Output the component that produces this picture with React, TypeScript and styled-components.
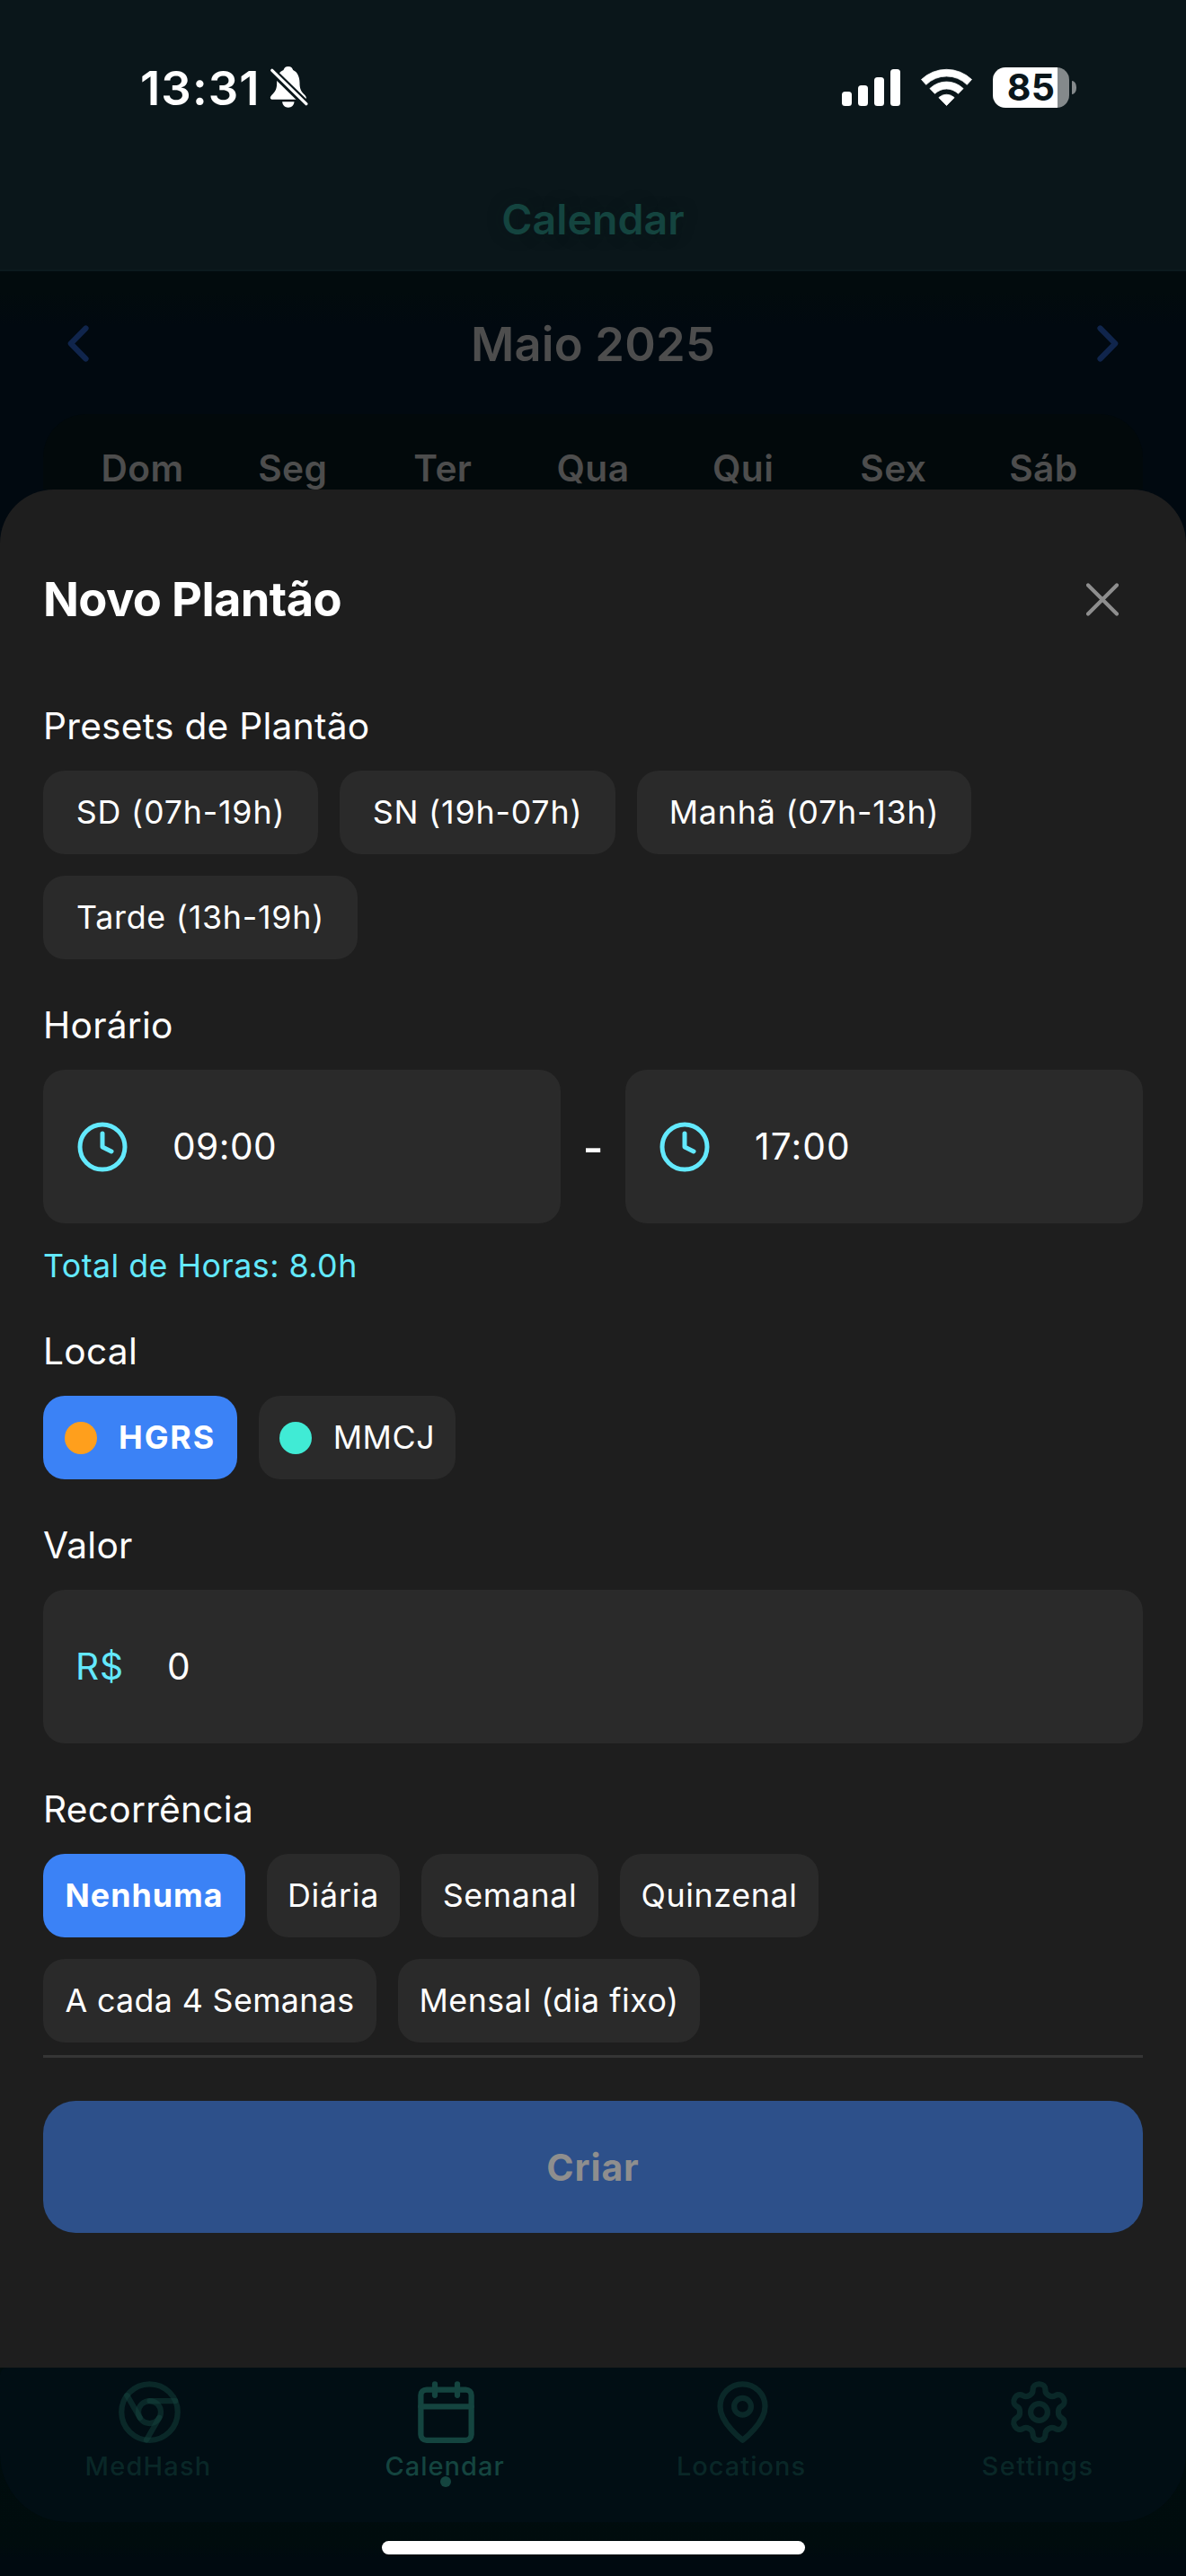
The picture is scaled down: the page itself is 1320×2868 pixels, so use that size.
import React from 'react';
import styled, { createGlobalStyle } from 'styled-components';

const GlobalStyle = createGlobalStyle`
  *, *::before, *::after { box-sizing: border-box; }
  html, body { margin: 0; padding: 0; background: #010910; }
  button { border: 0; padding: 0; margin: 0; background: none; font: inherit; color: inherit; }
`;

const colors = {
  sheet: '#1e1e1e',
  field: '#2a2a2a',
  primary: '#3b82f6',
  accent: '#63e9fd',
  text: '#ffffff',
  dimText: '#4d4d4d',
  teal: '#14443f',
  tealFaint: 'rgba(20, 68, 62, 0.48)',
};

const Screen = styled.div`
  width: 1320px;
  height: 2868px;
  overflow: hidden;
  display: flex;
  flex-direction: column;
  background: #010910;
  color: ${colors.text};
  font-family: Inter, 'Liberation Sans', sans-serif;
  font-size: 40.7px;
`;

/* ---------- Status bar and app header ---------- */

const Header = styled.header`
  height: 302px;
  flex: none;
  background: #0a161a;
  border-bottom: 2px solid #0b1a1e;
`;

const StatusBar = styled.div`
  height: 194px;
  display: flex;
  align-items: center;
  justify-content: space-between;
  padding: 0 122px 0 156px;
`;

const StatusGroup = styled.div<{ $gap: number }>`
  display: flex;
  align-items: center;
  gap: ${(p) => p.$gap}px;
`;

const Clock = styled.span`
  font-size: 52.6px;
  font-weight: 600;
  line-height: 64px;
  letter-spacing: 1.1px;
  padding-top: 2px;
`;

const SignalBars = styled.div`
  display: flex;
  align-items: flex-end;
  gap: 7px;
  height: 41px;
`;

const SignalBar = styled.span<{ $height: number }>`
  width: 11px;
  height: ${(p) => p.$height}px;
  border-radius: 3.5px;
  background: #fff;
`;

const Battery = styled.div`
  display: flex;
  align-items: center;
  gap: 3px;
`;

const BatteryBody = styled.div`
  width: 85px;
  height: 45px;
  border-radius: 14px;
  display: flex;
  align-items: center;
  justify-content: center;
  background: linear-gradient(to right, #fff 72px, #84898b 72px);
  color: #0a161a;
  font-size: 41px;
  font-weight: 700;
  line-height: 45px;
  letter-spacing: 0.4px;
`;

const BatteryNub = styled.span`
  width: 5px;
  height: 15px;
  border-radius: 0 5px 5px 0 / 0 7px 7px 0;
  background: #84898b;
`;

const AppTitle = styled.h1`
  margin: 0;
  height: 100px;
  line-height: 100px;
  text-align: center;
  font-size: 46.5px;
  font-weight: 600;
  color: ${colors.teal};
  text-shadow: 0 0 18px rgba(8, 30, 26, 0.35);
`;

/* ---------- Dimmed month view ---------- */

const Month = styled.section`
  height: 243px;
  flex: none;
  padding: 2px 48px 0;
  background: linear-gradient(to bottom, #020b0d 0, #020b0d 24px, #010910 60px);
`;

const MonthNav = styled.div`
  height: 157px;
  display: flex;
  align-items: center;
  justify-content: space-between;
  padding: 0 27px;
`;

const MonthTitle = styled.h2`
  margin: 0;
  font-size: 52.4px;
  font-weight: 600;
  line-height: 64px;
  letter-spacing: 0.24px;
  color: ${colors.dimText};
`;

const MonthCard = styled.div`
  height: 84px;
  border-radius: 48px 48px 0 0;
  background: #02090b;
  padding: 36px 27px 0;
`;

const Weekdays = styled.div`
  display: grid;
  grid-template-columns: repeat(7, 1fr);
  text-align: center;
  line-height: 49px;
  font-weight: 600;
  letter-spacing: 0.4px;
  color: ${colors.dimText};
`;

/* ---------- Sheet ---------- */

const SheetBackdrop = styled.div`
  flex: none;
  background: #010910;
`;

const Sheet = styled.main`
  height: 2091px;
  border-radius: 60px 60px 0 0;
  background: ${colors.sheet};
  padding: 92px 48px 150px;
  display: flex;
  flex-direction: column;
`;

const SheetHeader = styled.div`
  height: 60px;
  margin-bottom: 87px;
  display: flex;
  align-items: center;
  justify-content: space-between;
  padding-right: 27px;
`;

const SheetTitle = styled.h2`
  margin: 0;
  font-size: 52.4px;
  font-weight: 700;
  line-height: 62px;
  letter-spacing: -0.61px;
`;

const CloseButton = styled.button`
  width: 36px;
  height: 37px;
  display: flex;
`;

const Field = styled.section<{ $after: number }>`
  display: flex;
  flex-direction: column;
  gap: 24px;
  margin-bottom: ${(p) => p.$after}px;
`;

const Label = styled.h3`
  margin: 0;
  font-size: 40.7px;
  font-weight: 400;
  line-height: 50px;
  letter-spacing: 0.25px;
`;

const ChipRow = styled.div`
  display: flex;
  flex-wrap: wrap;
  gap: 24px;
`;

const Chip = styled.button<{ $width: number; $active?: boolean; $spacing: number }>`
  width: ${(p) => p.$width}px;
  height: 93px;
  border-radius: 24px;
  display: flex;
  align-items: center;
  justify-content: center;
  gap: 24px;
  white-space: nowrap;
  font-size: 35.8px;
  line-height: 47px;
  letter-spacing: ${(p) => p.$spacing}px;
  font-weight: ${(p) => (p.$active ? 700 : 400)};
  background: ${(p) => (p.$active ? colors.primary : colors.field)};
`;

const LocationDot = styled.span<{ $color: string }>`
  width: 36px;
  height: 36px;
  flex: none;
  border-radius: 50%;
  background: ${(p) => p.$color};
`;

const TimeRow = styled.div`
  display: grid;
  grid-template-columns: 1fr 72px 1fr;
  align-items: center;
`;

const InputBox = styled.div`
  height: 171px;
  border-radius: 24px;
  background: ${colors.field};
  display: flex;
  align-items: center;
  gap: 48px;
  padding: 0 36px;
`;

const InputValue = styled.span<{ $spacing?: number }>`
  line-height: 50px;
  letter-spacing: ${(p) => p.$spacing ?? 0}px;
`;

const Currency = styled.span`
  line-height: 50px;
  letter-spacing: 0.8px;
  color: ${colors.accent};
`;

const Dash = styled.span`
  text-align: center;
  font-size: 50px;
  line-height: 62px;
  font-weight: 500;
  padding-top: 2px;
`;

const TotalHours = styled.p`
  margin: 0;
  font-size: 35.8px;
  line-height: 46px;
  letter-spacing: 0.45px;
  color: ${colors.accent};
`;

const Footer = styled.div`
  border-top: 3px solid #353535;
  padding-top: 48px;
`;

const CreateButton = styled.button`
  display: block;
  width: 100%;
  height: 147px;
  border-radius: 36px;
  background: #2d508a;
  color: #8e8e8e;
  font-size: 41px;
  font-weight: 700;
  letter-spacing: 0.9px;
`;

/* ---------- Tab bar ---------- */

const TabArea = styled.footer`
  height: 232px;
  flex: none;
  display: flex;
  flex-direction: column;
  align-items: center;
  background: linear-gradient(to bottom, #000d0e 0, #000c0d 196px, #000a10 212px);
`;

const TabBar = styled.nav`
  width: 1320px;
  height: 172px;
  border-radius: 8px 8px 76px 76px;
  background: #010e14;
  display: grid;
  grid-template-columns: repeat(4, 1fr);
  padding-top: 12px;
`;

const Tab = styled.div<{ $active?: boolean }>`
  position: relative;
  display: flex;
  flex-direction: column;
  align-items: center;
  gap: 4px;
  color: ${(p) => (p.$active ? colors.teal : colors.tealFaint)};

  svg {
    display: block;
    margin-left: 3px;
  }
`;

const TabLabel = styled.span<{ $active?: boolean; $spacing: number }>`
  font-size: 29px;
  line-height: 37px;
  font-weight: 500;
  letter-spacing: ${(p) => p.$spacing}px;
`;

const TabDot = styled.span`
  position: absolute;
  left: 160px;
  top: 109px;
  width: 12px;
  height: 12px;
  border-radius: 50%;
  background: ${colors.teal};
`;

const HomeIndicator = styled.div`
  width: 471px;
  height: 15px;
  margin-top: 21px;
  border-radius: 8px;
  background: #fff;
`;

/* ---------- Icons ---------- */

const BellOffIcon = () => (
  <svg width="43" height="46" viewBox="0 0 128 138">
    <path
      fill="#fff"
      d="M62 0c-9 0-14 5-16 12C30 18 24 34 24 54c0 20-4 28-14 38-6 6-8 9-8 12 0 4 3 6 8 6h104c5 0 8-2 8-6 0-3-2-6-8-12-10-10-14-18-14-38 0-20-8-36-22-42C76 5 71 0 62 0z"
    />
    <path fill="#fff" d="M42 118h40c-1 12-9 19-20 19s-19-7-20-19z" />
    <path d="M4 11l120 117" stroke="#0a161a" strokeWidth="25" />
    <path d="M8 13l114 112" stroke="#fff" strokeWidth="10" strokeLinecap="round" />
  </svg>
);

const WifiIcon = () => (
  <svg width="57" height="42" viewBox="0 0 57 42">
    <g fill="#fff" transform="translate(28.5 41.5)" stroke="#fff" strokeWidth="0.8" strokeLinejoin="round">
      <path d="M-28-29A40.6 40.6 0 0 1 28-29L22.8-23.2A32.4 32.4 0 0 0-22.8-23.2Z" />
      <path d="M-18.6-18.9A26.6 26.6 0 0 1 18.6-18.9L13-13.2A18.6 18.6 0 0 0-13-13.2Z" />
      <path d="M-8.6-8.8A12.3 12.3 0 0 1 8.6-8.8L0 0Z" />
    </g>
  </svg>
);

const Chevron = ({ points }: { points: string }) => (
  <svg width="24" height="41" viewBox="0 0 24 41" fill="none">
    <polyline points={points} stroke="#10254c" strokeWidth="6.2" strokeLinecap="round" strokeLinejoin="round" />
  </svg>
);

const CloseIcon = () => (
  <svg width="36" height="37" viewBox="0 0 36 37" fill="none">
    <path d="M2 2.5l32 32M34 2.5l-32 32" stroke="#8e8e8e" strokeWidth="4.2" strokeLinecap="round" />
  </svg>
);

const LineIcon = ({ size, children }: { size: number; children: React.ReactNode }) => (
  <svg
    width={size}
    height={size}
    viewBox="0 0 24 24"
    fill="none"
    stroke="currentColor"
    strokeWidth="2"
    strokeLinecap="round"
    strokeLinejoin="round"
  >
    {children}
  </svg>
);

const ClockTint = styled.span`
  display: flex;
  color: ${colors.accent};
`;

const ClockIcon = () => (
  <ClockTint>
    <LineIcon size={60}>
      <circle cx="12" cy="12" r="10" />
      <polyline points="12 6 12 12 16 14" />
    </LineIcon>
  </ClockTint>
);

const tabs = [
  {
    label: 'MedHash',
    spacing: 1.2,
    icon: (
      <>
        <circle cx="12" cy="12" r="10" />
        <circle cx="12" cy="12" r="4" />
        <line x1="21.17" x2="12" y1="8" y2="8" />
        <line x1="3.95" x2="8.54" y1="6.06" y2="14" />
        <line x1="10.88" x2="15.46" y1="21.94" y2="14" />
      </>
    ),
  },
  {
    label: 'Calendar',
    spacing: 1.01,
    active: true,
    icon: (
      <>
        <rect width="18" height="18" x="3" y="4" rx="2" />
        <line x1="16" x2="16" y1="2" y2="6" />
        <line x1="8" x2="8" y1="2" y2="6" />
        <line x1="3" x2="21" y1="10" y2="10" />
      </>
    ),
  },
  {
    label: 'Locations',
    spacing: 1,
    icon: (
      <>
        <path d="M20 10c0 6-8 12-8 12s-8-6-8-12a8 8 0 0 1 16 0Z" />
        <circle cx="12" cy="10" r="3" />
      </>
    ),
  },
  {
    label: 'Settings',
    spacing: 1.5,
    icon: (
      <>
        <path d="M12.22 2h-.44a2 2 0 0 0-2 2v.18a2 2 0 0 1-1 1.73l-.43.25a2 2 0 0 1-2 0l-.15-.08a2 2 0 0 0-2.73.73l-.22.38a2 2 0 0 0 .73 2.73l.15.1a2 2 0 0 1 1 1.72v.51a2 2 0 0 1-1 1.74l-.15.09a2 2 0 0 0-.73 2.73l.22.38a2 2 0 0 0 2.73.73l.15-.08a2 2 0 0 1 2 0l.43.25a2 2 0 0 1 1 1.73V20a2 2 0 0 0 2 2h.44a2 2 0 0 0 2-2v-.18a2 2 0 0 1 1-1.73l.43-.25a2 2 0 0 1 2 0l.15.08a2 2 0 0 0 2.73-.73l.22-.39a2 2 0 0 0-.73-2.73l-.15-.08a2 2 0 0 1-1-1.74v-.5a2 2 0 0 1 1-1.74l.15-.09a2 2 0 0 0 .73-2.73l-.22-.38a2 2 0 0 0-2.73-.73l-.15.08a2 2 0 0 1-2 0l-.43-.25a2 2 0 0 1-1-1.73V4a2 2 0 0 0-2-2z" />
        <circle cx="12" cy="12" r="3" />
      </>
    ),
  },
];

const weekdays = ['Dom', 'Seg', 'Ter', 'Qua', 'Qui', 'Sex', 'Sáb'];

const presets = [
  { label: 'SD (07h-19h)', width: 306, spacing: 0.82 },
  { label: 'SN (19h-07h)', width: 307, spacing: 0.82 },
  { label: 'Manhã (07h-13h)', width: 372, spacing: 0.8 },
  { label: 'Tarde (13h-19h)', width: 350, spacing: 0.77 },
];

const locations = [
  { label: 'HGRS', color: '#ff9f1c', width: 216, spacing: 1.8, active: true },
  { label: 'MMCJ', color: '#40ebd5', width: 219, spacing: 0.6 },
];

const recurrences = [
  { label: 'Nenhuma', width: 225, spacing: 1, active: true },
  { label: 'Diária', width: 148, spacing: 0.8 },
  { label: 'Semanal', width: 197, spacing: 0.6 },
  { label: 'Quinzenal', width: 221, spacing: 0.65 },
  { label: 'A cada 4 Semanas', width: 371, spacing: 0.35 },
  { label: 'Mensal (dia fixo)', width: 336, spacing: 0.52 },
];

export default function App() {
  return (
    <>
      <GlobalStyle />
      <Screen>
        <Header>
          <StatusBar>
            <StatusGroup $gap={10}>
              <Clock>13:31</Clock>
              <BellOffIcon />
            </StatusGroup>
            <StatusGroup $gap={23}>
              <SignalBars>
                {[16, 23, 32, 41].map((h) => (
                  <SignalBar key={h} $height={h} />
                ))}
              </SignalBars>
              <WifiIcon />
              <Battery>
                <BatteryBody>85</BatteryBody>
                <BatteryNub />
              </Battery>
            </StatusGroup>
          </StatusBar>
          <AppTitle>Calendar</AppTitle>
        </Header>

        <Month>
          <MonthNav>
            <Chevron points="20.5 3.5 3.8 20.5 20.5 37.5" />
            <MonthTitle>Maio 2025</MonthTitle>
            <Chevron points="3.5 3.5 20.2 20.5 3.5 37.5" />
          </MonthNav>
          <MonthCard>
            <Weekdays>
              {weekdays.map((d) => (
                <span key={d}>{d}</span>
              ))}
            </Weekdays>
          </MonthCard>
        </Month>

        <SheetBackdrop>
          <Sheet>
            <SheetHeader>
              <SheetTitle>Novo Plantão</SheetTitle>
              <CloseButton aria-label="Fechar">
                <CloseIcon />
              </CloseButton>
            </SheetHeader>

            <Field $after={49}>
              <Label>Presets de Plantão</Label>
              <ChipRow>
                {presets.map((p) => (
                  <Chip key={p.label} $width={p.width} $spacing={p.spacing}>
                    {p.label}
                  </Chip>
                ))}
              </ChipRow>
            </Field>

            <Field $after={48}>
              <Label>Horário</Label>
              <TimeRow>
                <InputBox>
                  <ClockIcon />
                  <InputValue $spacing={0.43}>09:00</InputValue>
                </InputBox>
                <Dash>-</Dash>
                <InputBox>
                  <ClockIcon />
                  <InputValue $spacing={1.1}>17:00</InputValue>
                </InputBox>
              </TimeRow>
              <TotalHours>Total de Horas: 8.0h</TotalHours>
            </Field>

            <Field $after={49}>
              <Label>Local</Label>
              <ChipRow>
                {locations.map((l) => (
                  <Chip key={l.label} $width={l.width} $active={l.active} $spacing={l.spacing}>
                    <LocationDot $color={l.color} />
                    {l.label}
                  </Chip>
                ))}
              </ChipRow>
            </Field>

            <Field $after={49}>
              <Label>Valor</Label>
              <InputBox>
                <Currency>R$</Currency>
                <InputValue>0</InputValue>
              </InputBox>
            </Field>

            <Field $after={14}>
              <Label>Recorrência</Label>
              <ChipRow>
                {recurrences.map((r) => (
                  <Chip key={r.label} $width={r.width} $active={r.active} $spacing={r.spacing}>
                    {r.label}
                  </Chip>
                ))}
              </ChipRow>
            </Field>

            <Footer>
              <CreateButton>Criar</CreateButton>
            </Footer>
          </Sheet>
        </SheetBackdrop>

        <TabArea>
          <TabBar>
            {tabs.map((t) => (
              <Tab key={t.label} $active={t.active}>
                <LineIcon size={75}>{t.icon}</LineIcon>
                <TabLabel $spacing={t.spacing}>{t.label}</TabLabel>
                {t.active && <TabDot />}
              </Tab>
            ))}
          </TabBar>
          <HomeIndicator />
        </TabArea>
      </Screen>
    </>
  );
}
